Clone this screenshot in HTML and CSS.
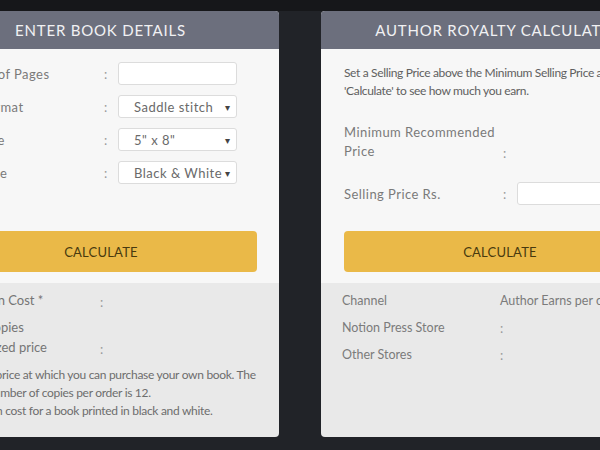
FILE: index.html
```html
<!DOCTYPE html>
<html>
<head>
<meta charset="utf-8">
<link rel="stylesheet" href="styles.css">
</head>
<body>
<div class="topbar"></div>
<div class="row">
  <section class="card">
    <h2 class="card-head">ENTER BOOK DETAILS</h2>
    <div class="card-body">
      <div class="field">
        <span class="label">Number of Pages</span><span class="colon">:</span>
        <div class="input"></div>
      </div>
      <div class="field">
        <span class="label">Book Format</span><span class="colon">:</span>
        <div class="input select"><span>Saddle stitch</span><span class="arrow">▾</span></div>
      </div>
      <div class="field">
        <span class="label">Book Size</span><span class="colon">:</span>
        <div class="input select"><span>5" x 8"</span><span class="arrow">▾</span></div>
      </div>
      <div class="field">
        <span class="label">Print Type</span><span class="colon">:</span>
        <div class="input select"><span>Black &amp; White</span><span class="arrow">▾</span></div>
      </div>
      <button class="btn btn-left">CALCULATE</button>
    </div>
    <div class="card-foot">
      <div class="res res-a"><span class="rlabel">Production Cost *</span><span class="colon">:</span></div>
      <div class="res res-b"><span class="rlabel">Author Copies<br>at subsidized price</span><span class="colon">:</span></div>
      <p class="note">*This is the price at which you can purchase your own book. The<br>minimum number of copies per order is 12.<br>**Production cost for a book printed in black and white.</p>
    </div>
  </section>

  <section class="card">
    <h2 class="card-head">AUTHOR ROYALTY CALCULATOR</h2>
    <div class="card-body">
      <p class="intro">Set a Selling Price above the Minimum Selling Price and click<br>'Calculate' to see how much you earn.</p>
      <div class="field tall">
        <span class="label">Minimum Recommended<br>Price</span><span class="colon">:</span>
      </div>
      <div class="field sell">
        <span class="label">Selling Price Rs.</span><span class="colon">:</span>
        <div class="input"></div>
      </div>
      <button class="btn btn-right">CALCULATE</button>
    </div>
    <div class="card-foot foot-right">
      <div class="chan"><span class="clabel">Channel</span><span class="cval">Author Earns per copy</span></div>
      <div class="chan"><span class="clabel">Notion Press Store</span><span class="cval colon">:</span></div>
      <div class="chan"><span class="clabel">Other Stores</span><span class="cval colon">:</span></div>
    </div>
  </section>
</div>
</body>
</html>
```
FILE: styles.css
```css
html, body {
  margin: 0;
  padding: 0;
  background: #212328;
  height: 450px;
  overflow: hidden;
  font-family: Lato, "Open Sans", sans-serif;
}
.topbar {
  height: 11px;
  background: #16171a;
}
.row {
  display: flex;
  gap: 42px;
  margin-left: -78px;
}
.card {
  flex: 0 0 357px;
  width: 357px;
  height: 426px;
  border-radius: 4px;
  overflow: hidden;
  display: flex;
  flex-direction: column;
  background: #e9e9e9;
}
.card-head {
  margin: 0;
  height: 38px;
  line-height: 38px;
  background: #6c6f7d;
  color: #f1f1f3;
  text-align: center;
  font-weight: 400;
  font-size: 15px;
  letter-spacing: 0.8px;
}
.card-body {
  background: #f7f7f7;
  height: 234px;
  box-sizing: border-box;
  padding: 13px 22px 0 23px;
  display: flex;
  flex-direction: column;
}
.field {
  display: flex;
  align-items: center;
  height: 23px;
  margin-bottom: 10px;
}
.label {
  width: 159px;
  color: #7a7a7a;
  font-size: 13px;
  letter-spacing: 0.45px;
}
.colon {
  color: #9a9a9a;
  font-size: 13px;
  width: 14px;
}
.input {
  width: 119px;
  height: 23px;
  box-sizing: border-box;
  background: #fff;
  border: 1px solid #dcdcdc;
  border-radius: 3px;
}
.select {
  display: flex;
  align-items: center;
  justify-content: space-between;
  padding: 0 6px 0 15px;
  color: #6a6a6a;
  font-size: 13px;
  letter-spacing: 0.5px;
}
.arrow {
  font-size: 10px;
  color: #444;
}
.btn {
  height: 41px;
  border: 0;
  border-radius: 4px;
  background: #eab948;
  color: #48390f;
  font-family: Lato, sans-serif;
  font-size: 13px;
  letter-spacing: 0.2px;
  padding: 0;
}
.btn-left { margin-top: 37px; }
.intro {
  margin: 2px 0 0 0;
  color: #606060;
  font-size: 12px;
  line-height: 18px;
  letter-spacing: -0.35px;
  white-space: nowrap;
}
.field.tall {
  height: auto;
  align-items: flex-end;
  margin-top: 23px;
  margin-bottom: 0;
}
.field.tall .label { line-height: 19px; }
.field.sell {
  margin-top: 21px;
  margin-bottom: 0;
}
.btn-right { margin-top: 26px; }
.card-foot {
  padding: 7px 20px 0 20px;
}
.res {
  display: flex;
  align-items: flex-end;
}
.rlabel {
  width: 158px;
  font-size: 13px;
  line-height: 20px;
  color: #757575;
}
.res-a { margin-bottom: 7px; }
.note {
  margin: 9px 0 0 -4px;
  font-size: 12px;
  line-height: 18px;
  letter-spacing: -0.3px;
  color: #6d6d6d;
  white-space: nowrap;
}
.foot-right {
  padding: 4px 20px 0 21px;
}
.chan {
  display: flex;
  height: 27px;
  align-items: center;
  font-size: 12.5px;
  color: #7b7b7b;
}
.clabel { width: 158px; }
.cval { width: auto; }
```
